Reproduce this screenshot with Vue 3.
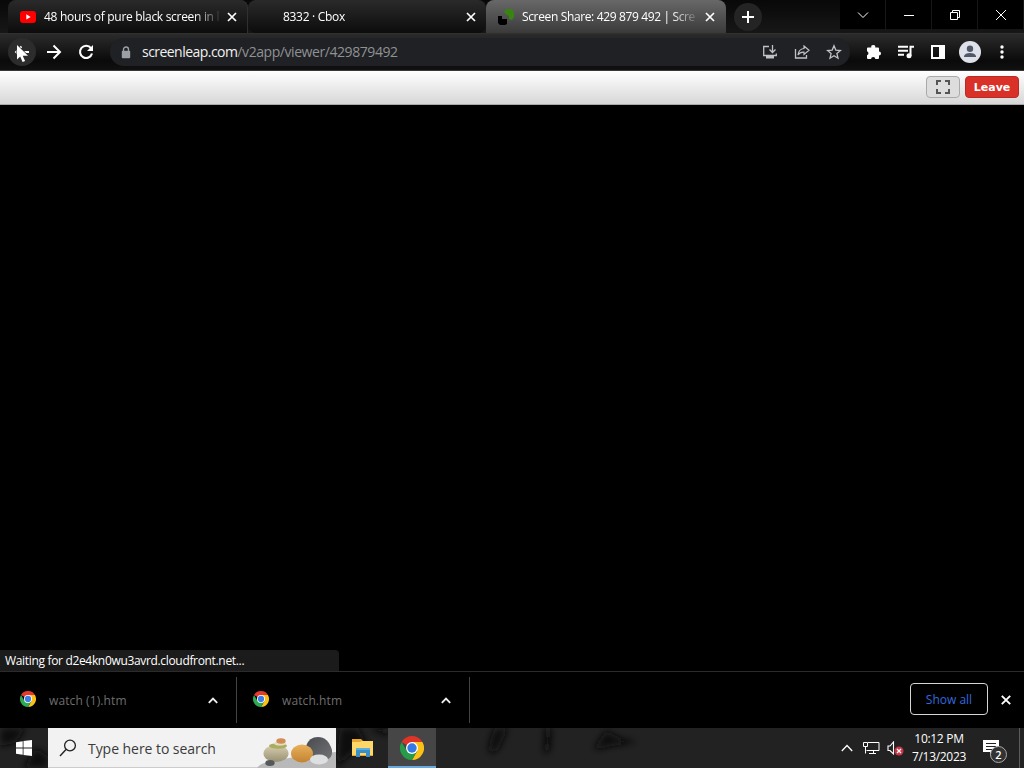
<script setup>
import { ref } from 'vue'

const tabs = ref([
    { title: '48 hours of pure black screen in l', icon: 'youtube', active: false },
    { title: '8332 · Cbox', icon: '', active: false },
    { title: 'Screen Share: 429 879 492 | Scre', icon: 'leap', active: true }
])

const downloads = ref(['watch (1).htm', 'watch.htm'])
</script>

<template>
    <div class="desktop">
        <header class="tab-strip">
            <div v-for="(tab, i) in tabs" :key="i" class="tab" :class="['tab-' + i, tab.active && 'tab-active']">
                <span class="favicon">
                    <svg v-if="tab.icon === 'youtube'" width="16" height="16" viewBox="0 0 16 16">
                        <rect y="2" width="16" height="12" rx="3" fill="#f00" />
                        <path d="M6.3 5.3v5.2L10.7 8z" fill="#fff" />
                    </svg>
                    <svg v-if="tab.icon === 'leap'" width="18" height="18" viewBox="0 0 18 18">
                        <path d="M6 4q1-3 5-3 5 0 5 5v3l-2 3-3-1V8L8 6z" fill="#378510" />
                        <path d="M0 8h4v3h5v5l-2 1H2l-2-2z" fill="#000" />
                    </svg>
                </span>
                <span class="tab-title">{{ tab.title }}</span>
                <svg class="tab-close" width="10" height="10" viewBox="0 0 10 10"><path d="M1 1l8 8M9 1L1 9" /></svg>
            </div>
            <div class="new-tab">
                <svg width="14" height="14" viewBox="0 0 14 14"><path d="M7 1v12M1 7h12" stroke="#fff" stroke-width="2" /></svg>
            </div>
            <div class="window-controls">
                <span><svg width="12" height="12" viewBox="0 0 12 12"><path d="M1 3.5l5 5 5-5" /></svg></span>
                <span><svg width="12" height="12" viewBox="0 0 12 12"><path d="M1 6.5h10" /></svg></span>
                <span><svg width="12" height="12" viewBox="0 0 12 12"><path d="M1.5 3.5h7v7h-7zM3.5 3V1.500h7v7H9" /></svg></span>
                <span><svg width="12" height="12" viewBox="0 0 12 12"><path d="M1 1l10 10M11 1L1 11" /></svg></span>
            </div>
        </header>

        <nav class="toolbar">
            <span class="tool back">
                <svg width="16" height="16" viewBox="0 0 16 16"><path d="M15 8H2M7.500 2.500L2 8l5.500 5.500" fill="none" stroke="#fff" stroke-width="1.800" /></svg>
                <svg class="cursor" width="13" height="19" viewBox="0 0 13 19"><path d="M1 1v14.500l3.200-3 2.400 5.500 2.500-1-2.400-5.300H12z" fill="#fff" stroke="#303030" stroke-width="1.200" paint-order="stroke" /></svg>
            </span>
            <span class="tool">
                <svg width="16" height="16" viewBox="0 0 16 16"><path d="M1 8h12.500M7.500 1.500L14 8l-6.500 6.500" fill="none" stroke="#fff" stroke-width="2" /></svg>
            </span>
            <span class="tool">
                <svg width="16" height="16" viewBox="0 0 16 16">
                    <path d="M13 4.200A6.100 6.100 0 1 0 14 9.500" fill="none" stroke="#fff" stroke-width="2.100" />
                    <path d="M15 1v6H9z" fill="#fff" />
                </svg>
            </span>
            <div class="omnibox">
                <svg class="lock" width="10" height="13" viewBox="0 0 10 13">
                    <path d="M2.500 6V3.500a2.500 2.500 0 0 1 5 0V6" fill="none" stroke="#9b9fa6" stroke-width="1.400" />
                    <rect x=".8" y="4.700" width="8.400" height="7.500" rx="1" fill="#9b9fa6" />
                </svg>
                <span class="url"><b>screenleap.com</b>/v2app/viewer/429879492</span>
                <span class="tool">
                    <svg class="line" width="16" height="16" viewBox="0 0 16 16">
                        <path d="M7 2.500H1.700v9h12.600V9.500M10.500 1v7M7.500 5.500l3 3 3-3" />
                        <path d="M4 12h8v2.500H4z" fill="#bfc2c6" stroke="none" />
                    </svg>
                </span>
                <span class="tool">
                    <svg class="line" width="16" height="16" viewBox="0 0 16 16">
                        <path d="M1.500 5v9h11v-3" />
                        <path d="M10 2l5 4.300-5 4.200V8.200C7 8 5.200 9 4 11c.3-3.700 2.200-6 6-6.500z" stroke-width="1.200" />
                    </svg>
                </span>
                <span class="tool">
                    <svg class="line" width="16" height="16" viewBox="0 0 16 16"><path d="M8 1.800l1.800 4.300 4.700.4-3.600 3.100 1.100 4.600L8 11.700l-4 2.500 1.100-4.600-3.600-3.100 4.700-.4z" /></svg>
                </span>
            </div>
            <div class="extensions">
                <span class="tool">
                    <svg width="16" height="16" viewBox="0 0 16 16"><path d="M1 4.500q0-1 1-1h3.300a2 2 0 1 1 3.900 0H12q1 0 1 1v3a2 2 0 1 1 0 4V14q0 1-1 1H9.300a2.100 2.100 0 0 0-4.200 0H2q-1 0-1-1v-2.800a2.100 2.100 0 0 0 0-4z" fill="#fff" /></svg>
                </span>
                <span class="tool">
                    <svg width="18" height="16" viewBox="0 0 18 16">
                        <path d="M1 2.700h10M1 6.700h10M1 10.700h6M13.500 12V2.700H17" fill="none" stroke="#fff" stroke-width="2" />
                        <circle cx="12" cy="11.800" r="2.500" fill="#fff" />
                    </svg>
                </span>
                <span class="tool">
                    <svg width="14" height="14" viewBox="0 0 14 14"><path d="M0 0h14v14H0zM2 2v10h6V2z" fill="#fff" fill-rule="evenodd" /></svg>
                </span>
                <span class="tool">
                    <svg width="22" height="22" viewBox="0 0 22 22">
                        <circle cx="11" cy="11" r="11" fill="#dee1e9" />
                        <circle cx="11" cy="7.800" r="3.200" fill="#51586a" />
                        <path d="M5 16v-1q1-3 6-3t6 3v1z" fill="#51586a" />
                    </svg>
                </span>
                <span class="tool">
                    <svg width="4" height="14" viewBox="0 0 4 14" fill="#fff">
                        <circle cx="2" cy="2" r="1.700" /><circle cx="2" cy="7" r="1.700" /><circle cx="2" cy="12" r="1.700" />
                    </svg>
                </span>
            </div>
        </nav>

        <section class="share-bar">
            <button class="fullscreen">
                <svg width="14" height="14" viewBox="0 0 14 14"><path d="M1 5V1h4M9 1h4v4M13 9v4H9M5 13H1V9" fill="none" stroke="#555" stroke-width="2" /></svg>
            </button>
            <button class="leave">Leave</button>
        </section>

        <main class="viewer">
            <div class="status">Waiting for d2e4kn0wu3avrd.cloudfront.net...</div>
        </main>

        <section class="downloads">
            <div v-for="(file, i) in downloads" :key="file" class="download" :class="'download-' + i">
                <svg class="chrome" width="16" height="16" viewBox="0 0 24 24">
                    <path d="M12 12L1.600 6A12 12 0 0 1 22.400 6z" fill="#e33b2e" />
                    <path d="M12 12V6h10.400A12 12 0 0 1 12 24l5.200-9z" fill="#fbc116" />
                    <path d="M12 12l5.200 3L12 24A12 12 0 0 1 1.600 6l5.200 9z" fill="#2da94f" />
                    <circle cx="12" cy="12" r="6" fill="#fff" /><circle cx="12" cy="12" r="4.700" fill="#3f7de8" />
                </svg>
                <span class="file">{{ file }}</span>
                <svg class="chevron" width="10" height="7" viewBox="0 0 10 7"><path d="M.8 5.800L5 1.600l4.200 4.200" fill="none" stroke="#eee" stroke-width="1.900" /></svg>
            </div>
            <button class="show-all">Show all</button>
            <svg class="dismiss" width="10" height="10" viewBox="0 0 10 10"><path d="M.8.8l8.400 8.400M9.200.8L.8 9.200" stroke="#fff" stroke-width="1.900" /></svg>
        </section>

        <footer class="taskbar">
            <!-- dark wallpaper showing through the bar -->
            <svg class="smoke" width="1024" height="40" viewBox="0 0 1024 40">
                <defs><filter id="soft" x="-20%" y="-30%" width="140%" height="160%"><feGaussianBlur stdDeviation="3.500" /></filter></defs>
                <g filter="url(#soft)" fill="#0c0c0c">
                    <path d="M0 0h26l-11 15-15 3zM35 20l13 8v12H24zM340 0h18l8 14-22 18-8 8zM368 0h20v8zM495 0h13l-10 22-8 4q-3-10 5-26zM545 0h6l-1 22-6 5zM598 14l8-11 16 8 16 3-26 4-18 4z" />
                </g>
            </svg>
            <span class="start">
                <svg width="16" height="16" viewBox="0 0 16 16"><path d="M0 2.200l6.700-1v6.400H0zM7.500 1.100L16 0v7.600H7.500zM0 8.400h6.700v6.400l-6.700-1zM7.500 8.400H16V16l-8.500-1.100z" fill="#fff" /></svg>
            </span>
            <div class="search">
                <svg width="18" height="18" viewBox="0 0 18 18"><circle cx="11" cy="6.500" r="5.400" fill="none" stroke="#222" stroke-width="1.300" /><path d="M7 10.500L1 17" stroke="#222" stroke-width="1.400" /></svg>
                <span class="hint">Type here to search</span>
                <svg class="stones" width="80" height="40" viewBox="0 0 80 40">
                    <defs>
                        <linearGradient id="sand" x2="0" y2="1"><stop stop-color="#d8cfb0" /><stop offset="1" stop-color="#989073" /></linearGradient>
                        <linearGradient id="amber" x2="0" y2="1"><stop stop-color="#e9b05c" /><stop offset="1" stop-color="#c38432" /></linearGradient>
                        <linearGradient id="slate" x2="1" y2="1"><stop stop-color="#484a4d" /><stop offset="1" stop-color="#727376" /></linearGradient>
                    </defs>
                    <path d="M1 40q3-5 15-7l40-7 24-2v16z" fill="#b9b9b9" />
                    <path d="M50 18q3-9 12-9 10 0 14 13 1 9-7 10L55 27z" fill="url(#slate)" />
                    <ellipse cx="20" cy="25.500" rx="12.500" ry="8.500" fill="url(#sand)" />
                    <ellipse cx="22" cy="18" rx="9" ry="2.700" fill="#a8ad62" />
                    <ellipse cx="24" cy="15.500" rx="6" ry="2" fill="#e6ddc1" />
                    <ellipse cx="25" cy="13" rx="4.700" ry="2.700" fill="#d18b56" />
                    <ellipse cx="46" cy="25.500" rx="11" ry="9" fill="url(#amber)" />
                    <ellipse cx="63" cy="31.500" rx="9" ry="5" fill="#dedfe1" />
                    <ellipse cx="14" cy="35" rx="4.700" ry="3" fill="#55585b" />
                </svg>
            </div>
            <span class="app">
                <svg width="24" height="20" viewBox="0 0 24 20">
                    <path d="M1 1h9l2 2h10v15H1z" fill="#eba62d" />
                    <path d="M1 4h8l2-1h11v14H1z" fill="#ffd768" />
                    <path d="M5 10h14v9h-4v-4H9v4H5z" fill="#398fc8" />
                    <path d="M5 10h14v2H5z" fill="#5caedf" />
                </svg>
            </span>
            <span class="app app-running">
                <svg width="24" height="24" viewBox="0 0 24 24">
                    <path d="M12 12L1.600 6A12 12 0 0 1 22.400 6z" fill="#df3428" />
                    <path d="M12 12V6h10.400A12 12 0 0 1 12 24l5.200-9z" fill="#fbc116" />
                    <path d="M12 12l5.200 3L12 24A12 12 0 0 1 1.600 6l5.200 9z" fill="#269b48" />
                    <circle cx="12" cy="12" r="6" fill="#fff" /><circle cx="12" cy="12" r="4.700" fill="#3579e5" />
                </svg>
            </span>
            <div class="tray">
                <svg class="tray-up" width="12" height="8" viewBox="0 0 12 8"><path d="M.8 7L6 1.500 11.200 7" fill="none" stroke="#fff" stroke-width="1.300" /></svg>
                <svg class="network" width="17" height="14" viewBox="0 0 17 14"><path d="M5 1.500h11v8H3.500M.5 1.500h4v4h-4zM2.500 5.500v7M10.500 9.500v3M6 12.500h7" fill="none" stroke="#fff" /></svg>
                <svg class="sound" width="17" height="15" viewBox="0 0 17 15">
                    <path d="M1 5h2l3.500-4v12L3 9.500H1z" fill="none" stroke="#fff" stroke-width="1.100" />
                    <circle cx="12" cy="10" r="4.500" fill="#c93746" /><path d="M10 8l4 4M14 8l-4 4" stroke="#fff" stroke-width="1.200" />
                </svg>
                <div class="clock"><div class="time">10:12 PM</div><div>7/13/2023</div></div>
                <div class="notice">
                    <svg width="16" height="16" viewBox="0 0 16 16"><path d="M0 0h16v12H10l-3 4v-4H0z" fill="#fff" /><path d="M3 3.500h10M3 6.500h10M3 9.500h7" stroke="#222" /></svg>
                    <span class="badge">2</span>
                </div>
            </div>
        </footer>
    </div>
</template>

<style>
body {
    margin: 0;
    background: #000;
}
</style>

<style scoped>
* {
    box-sizing: border-box;
}

svg {
    display: block;
    flex: none;
}

button {
    padding: 0;
}

.desktop {
    display: flex;
    flex-direction: column;
    width: 1024px;
    height: 768px;
    overflow: hidden;
    background: #000;
    font-family: "Open Sans", "Noto Sans", sans-serif;
    font-size: 12px;
    color: #fff;
    white-space: nowrap;
}

.tab-strip {
    display: flex;
    flex: none;
    height: 33px;
    padding-left: 8px;
    background: linear-gradient(#080808, #171717);
}

.tab {
    display: flex;
    flex: none;
    align-items: center;
    width: 240px;
    padding: 0 11px 0 12px;
    border-radius: 8px 8px 0 0;
    background: linear-gradient(#2a2a2a, #0c0c0c);
}

.tab-0 {
    box-shadow: inset -1px 0 #303030;
}

.tab-1 {
    width: 238px;
    padding-left: 11px;
    padding-right: 10px;
    border-radius: 8px;
}

.tab-active {
    background: linear-gradient(#686868, #3a3a3a);
}

.favicon {
    width: 16px;
    margin-right: 8px;
}

.tab-title {
    width: 175px;
    letter-spacing: -0.3px;
    mask-image: linear-gradient(90deg, #000 150px, transparent 178px);
}

.tab-active .tab-title {
    letter-spacing: -0.36px;
}

.tab-close {
    margin-left: auto;
    stroke: #fff;
    stroke-width: 1.7;
}

.new-tab {
    display: flex;
    align-items: center;
    justify-content: center;
    width: 28px;
    height: 28px;
    margin: 3px 0 0 8px;
    border-radius: 50%;
    background: #242424;
}

.window-controls {
    display: flex;
    height: 29px;
    margin-left: auto;
    background: #000;
}

.window-controls span {
    display: flex;
    align-items: center;
    justify-content: center;
    width: 46px;
    border-right: 1px solid #171717;
}

.window-controls svg {
    fill: none;
    stroke: #fff;
    stroke-width: 1;
}

.toolbar {
    display: flex;
    flex: none;
    align-items: center;
    height: 38px;
    padding: 0 6px;
    border-top: 1px solid #303030;
    border-bottom: 1px solid #383838;
    background: linear-gradient(#2b2b2b, #0a0a0a 75%, #111);
}

.tool {
    display: flex;
    flex: none;
    align-items: center;
    justify-content: center;
    width: 32px;
    height: 28px;
}

.back {
    position: relative;
    width: 28px;
    margin: 0 2px;
    border-radius: 50%;
    background: #2c2c2c;
}

.cursor {
    position: absolute;
    left: 8px;
    top: 6px;
}

.omnibox {
    display: flex;
    align-items: center;
    width: 740px;
    height: 28px;
    margin-left: 8px;
    border-radius: 14px;
    background: #202124;
}

.lock {
    margin: 0 11px;
}

.url {
    flex: 1;
    font-size: 14px;
    line-height: 20px;
    padding-bottom: 1px;
    letter-spacing: -0.43px;
    color: #8f9194;
}

.url b {
    font-weight: 400;
    letter-spacing: -0.54px;
    color: #f1f1f1;
}

.line {
    fill: none;
    stroke: #bfc2c6;
    stroke-width: 1.3;
}

.extensions {
    display: flex;
    margin-left: 8px;
}

.share-bar {
    display: flex;
    flex: none;
    align-items: center;
    justify-content: flex-end;
    gap: 5px;
    height: 34px;
    padding-right: 5px;
    padding-bottom: 1px;
    border-bottom: 1px solid #aaa;
    background: linear-gradient(#fff, #d7d7d7);
}

.fullscreen {
    display: flex;
    align-items: center;
    justify-content: center;
    width: 34px;
    height: 22px;
    border: 1px solid #aaa;
    border-radius: 4px;
    background: #ddd;
}

.leave {
    width: 54px;
    height: 22px;
    padding-top: 1px;
    border: 1px solid #b82a25;
    border-radius: 4px;
    background: #d93028;
    color: #fff;
    font: bold 11px/20px "DejaVu Sans", sans-serif;
}

.viewer {
    display: flex;
    flex: 1;
    align-items: flex-end;
}

.status {
    width: 339px;
    height: 21px;
    padding-left: 5px;
    border-radius: 0 4px 0 0;
    background: #1b1b1b;
    line-height: 21px;
    letter-spacing: -0.33px;
}

.downloads {
    display: flex;
    flex: none;
    align-items: center;
    height: 57px;
    padding-right: 13px;
    border-top: 1px solid #2b2b2b;
}

.download {
    display: flex;
    align-items: center;
    width: 237px;
    height: 46px;
    padding: 0 18px 0 20px;
    border-right: 1px solid #444;
}

.download-1 {
    width: 233px;
    padding-left: 16px;
}

.chrome {
    margin-bottom: 2px;
}

.file {
    margin-left: 13px;
    letter-spacing: 0.1px;
    color: #6e6e6e;
}

.chevron {
    margin-left: auto;
}

.show-all {
    width: 78px;
    height: 32px;
    margin-left: auto;
    margin-bottom: 2px;
    border: 1px solid #d5d5d5;
    border-radius: 4px;
    background: #000;
    color: #3468de;
    font: 12px "Open Sans", sans-serif;
}

.dismiss {
    margin-left: 13px;
    margin-bottom: 1px;
}

.taskbar {
    position: relative;
    display: flex;
    flex: none;
    height: 40px;
    background: #222;
}

.smoke {
    position: absolute;
    left: 0;
    top: 0;
}

.start,
.app {
    position: relative;
    display: flex;
    align-items: center;
    justify-content: center;
    width: 48px;
}

.app:not(.app-running) {
    width: 52px;
    padding-left: 2px;
}

.search {
    position: relative;
    display: flex;
    align-items: center;
    width: 288px;
    padding-left: 11px;
    background: #f2f2f2;
    box-shadow: inset 0 -1px #ccc;
}

.hint {
    margin-left: 11px;
    padding-top: 1px;
    color: #3b3b3b;
    font-size: 14px;
    letter-spacing: -0.05px;
}

.stones {
    margin-left: auto;
}

.app-running {
    padding-top: 2px;
    background: #464646;
    border-bottom: 2px solid #69a9df;
}

.tray {
    position: relative;
    display: flex;
    align-items: center;
    margin-left: auto;
    padding-right: 4px;
}

.tray::after {
    content: "";
    width: 1px;
    height: 40px;
    background: #5c5c5c;
}

.network {
    margin-left: 10px;
}

.sound {
    margin-left: 7px;
}

.clock {
    width: 64px;
    margin-left: 3px;
    text-align: center;
    line-height: 18px;
    letter-spacing: -0.3px;
}

.notice {
    position: relative;
    width: 48px;
    padding-left: 12px;
}

.badge {
    position: absolute;
    left: 19px;
    top: 6px;
    width: 17px;
    height: 17px;
    border: 1px solid #aaa;
    border-radius: 50%;
    background: #333;
    font-size: 11px;
    font-weight: 600;
    line-height: 15px;
    text-align: center;
}
</style>
